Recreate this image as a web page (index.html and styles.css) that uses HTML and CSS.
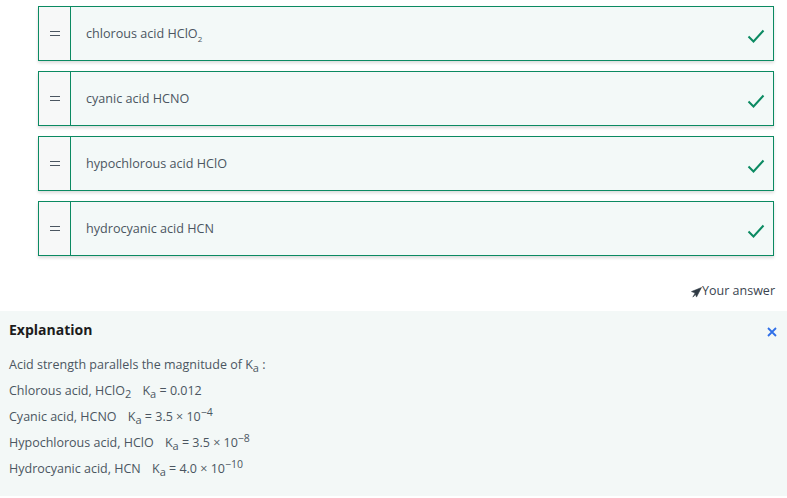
FILE: index.html
```html
<!DOCTYPE html>
<html lang="en">
<head>
    <meta charset="UTF-8">
    <meta name="viewport" content="width=device-width, initial-scale=1.0">
    <title>Rank the acids</title>
    <link rel="stylesheet" href="styles.css">
</head>
<body>
    <ul class="order-list">
        <li class="order-item">
            <span class="handle"><i></i></span>
            <span class="label">chlorous acid HClO<sub>2</sub></span>
            <svg class="check" viewBox="0 0 18 14"><path d="M1.5 7.5l5 5L16.5 1.5"/></svg>
        </li>
        <li class="order-item">
            <span class="handle"><i></i></span>
            <span class="label">cyanic acid HCNO</span>
            <svg class="check" viewBox="0 0 18 14"><path d="M1.5 7.5l5 5L16.5 1.5"/></svg>
        </li>
        <li class="order-item">
            <span class="handle"><i></i></span>
            <span class="label">hypochlorous acid HClO</span>
            <svg class="check" viewBox="0 0 18 14"><path d="M1.5 7.5l5 5L16.5 1.5"/></svg>
        </li>
        <li class="order-item">
            <span class="handle"><i></i></span>
            <span class="label">hydrocyanic acid HCN</span>
            <svg class="check" viewBox="0 0 18 14"><path d="M1.5 7.5l5 5L16.5 1.5"/></svg>
        </li>
    </ul>

    <div class="answer-tag">
        <svg class="plane" viewBox="0 0 12 12"><path d="M11.5 0.5L0.5 5l4 1.5L6 11z"/><path d="M4.5 6.5L2 11l3.5-3"/></svg>
        <span>Your answer</span>
    </div>

    <section class="explanation">
        <div class="explanation-head">
            <h2>Explanation</h2>
            <svg class="close" viewBox="0 0 10 10"><path d="M1 1l8 8M9 1L1 9"/></svg>
        </div>
        <p>Acid strength parallels the magnitude of <span class="math first">K<sub>a</sub></span> :</p>
        <p>Chlorous acid, HClO<sub class="big">2</sub> <span class="math">K<sub>a</sub> = 0.012</span></p>
        <p>Cyanic acid, HCNO <span class="math">K<sub>a</sub> = 3.5 × 10<sup>−4</sup></span></p>
        <p>Hypochlorous acid, HClO <span class="math">K<sub>a</sub> = 3.5 × 10<sup>−8</sup></span></p>
        <p>Hydrocyanic acid, HCN <span class="math">K<sub>a</sub> = 4.0 × 10<sup>−10</sup></span></p>
    </section>
</body>
</html>
```

FILE: styles.css
```css
body {
    font-family: "Open Sans", Arial, sans-serif;
    margin: 0;
    background-color: #ffffff;
    color: #4b5661;
}

.order-list {
    list-style: none;
    margin: 0;
    padding: 6px 13px 0 38px;
    display: flex;
    flex-direction: column;
    gap: 10px;
}

.order-item {
    display: flex;
    align-items: center;
    height: 55px;
    box-sizing: border-box;
    border: 1px solid #0b8a62;
    background-color: #f3f9f8;
    box-shadow: 0 2px 3px rgba(0, 0, 0, 0.14);
}

.handle {
    width: 31px;
    align-self: stretch;
    display: flex;
    align-items: center;
    justify-content: center;
    background-color: #f7f8f8;
    border-right: 1px solid #0b8a62;
}

/* drag grip: two short bars */
.handle i {
    display: block;
    width: 10px;
    height: 5px;
    box-sizing: border-box;
    border-top: 1.5px solid #4b5661;
    border-bottom: 1.5px solid #4b5661;
}

.label {
    flex: 1;
    padding-left: 15px;
    font-size: 12.6px;
}

.label sub {
    font-size: 8px;
    line-height: 0;
}

.check {
    width: 18px;
    height: 14px;
    margin-right: 8px;
    margin-top: 4px;
    fill: none;
    stroke: #0b8a62;
    stroke-width: 2;
}

.answer-tag {
    display: flex;
    justify-content: flex-end;
    align-items: center;
    padding: 23px 12px 0 0;
    height: 22px;
    font-size: 12.5px;
    color: #3a4550;
}

.plane {
    width: 11px;
    height: 11px;
    margin-top: 4px;
    fill: #2f3a44;
    stroke: #2f3a44;
    stroke-width: 0.6;
}

.explanation {
    margin-top: 10px;
    background-color: #f3f8f7;
    padding: 9px 9px 14px 9px;
}

.explanation-head {
    display: flex;
    justify-content: space-between;
    align-items: center;
}

.explanation h2 {
    margin: 0;
    font-size: 14px;
    font-weight: 700;
    color: #1c1c1c;
}

.close {
    width: 10px;
    height: 10px;
    margin-right: 1px;
    margin-top: 4px;
    fill: none;
    stroke: #2f6fe8;
    stroke-width: 1.8;
}

.explanation p {
    margin: 0;
    height: 26px;
    line-height: 26px;
    font-size: 12.5px;
}

.explanation-head + p {
    margin-top: 13px;
}

.math {
    margin-left: 8px;
    font-size: 12.5px;
}

.math.first {
    margin-left: 0;
}

.math sub,
sub.big {
    font-size: 11px;
    vertical-align: -3px;
    line-height: 0;
}

.math sup {
    font-size: 10.5px;
    vertical-align: 5px;
    line-height: 0;
}
```
